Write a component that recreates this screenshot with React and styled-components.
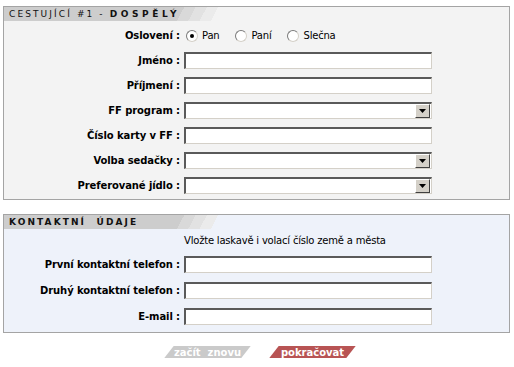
import React from "react";
import styled, { createGlobalStyle } from "styled-components";

const Global = createGlobalStyle`
  html, body { margin: 0; padding: 0; background: #fff; }
  body { font-family: Tahoma, "DejaVu Sans", Verdana, sans-serif; font-size: 11px; color: #000; }
`;

const Page = styled.div`
  width: 507px;
  padding: 6px 0 0 3px;
  display: flex;
  flex-direction: column;
`;

const Box = styled.section`
  border: 1px solid #a4a4a4;
  background: ${(p) => (p.$blue ? "#eef2fa" : "#f3f3f3")};
  margin-bottom: ${(p) => p.$mb || 0}px;
  padding-bottom: ${(p) => p.$pb || 0}px;
`;

const Header = styled.div`
  width: 218px;
  height: 14px;
  display: flex;
  align-items: center;
  padding-left: 5px;
  box-sizing: border-box;
  background: linear-gradient(
    118deg,
    #cdcdcd 0 80%,
    #d9d9d9 80% 85%,
    #e2e2e2 85% 90%,
    #ebebeb 90% 95%,
    transparent 95%
  );
  font-family: "DejaVu Sans", Verdana, sans-serif;
  font-size: 9px;
  letter-spacing: 2.1px;
  white-space: pre;
  color: #111;
`;

const Strong = styled.b`
  font-weight: bold;
  letter-spacing: ${(p) => p.$ls || 2.1}px;
`;

const Row = styled.div`
  display: grid;
  grid-template-columns: 176px 248px;
  column-gap: 4px;
  align-items: center;
  height: ${(p) => p.$h || 25}px;
  margin-top: ${(p) => p.$mt || 0}px;
`;

const Label = styled.label`
  text-align: right;
  font-family: "DejaVu Sans", Verdana, sans-serif;
  font-weight: bold;
  font-size: 10px;
  letter-spacing: -0.1px;
  white-space: nowrap;
`;

const Info = styled.div`
  grid-column: 2;
  font-family: "DejaVu Sans", Verdana, sans-serif;
  font-size: 10px;
  letter-spacing: -0.2px;
  white-space: nowrap;
`;

const Field = styled.div`
  height: 17px;
  box-sizing: border-box;
  background: #fff;
  border-top: 2px solid #5a5a5a;
  border-left: 2px solid #5a5a5a;
  border-right: 1px solid #d4d0c8;
  border-bottom: 1px solid #d4d0c8;
  display: flex;
  justify-content: flex-end;
  align-items: stretch;
`;

const DropBtn = styled.div`
  width: 15px;
  box-sizing: border-box;
  background: #d4d0c8;
  border-top: 1px solid #fff;
  border-left: 1px solid #fff;
  border-right: 1px solid #404040;
  border-bottom: 1px solid #404040;
  display: flex;
  align-items: center;
  justify-content: center;
  margin-right: 1px;
`;

const Radios = styled.div`
  display: flex;
  align-items: center;
  padding-left: 2px;
  font-family: "DejaVu Sans", Verdana, sans-serif;
  font-size: 10px;
  letter-spacing: -0.2px;
`;

const RadioItem = styled.span`
  display: flex;
  align-items: center;
  gap: 4px;
  margin-right: ${(p) => p.$mr || 0}px;
`;

const Circle = styled.span`
  width: 12px;
  height: 12px;
  box-sizing: border-box;
  border-radius: 50%;
  border: 1px solid #7a7a7a;
  border-bottom-color: #d4d0c8;
  border-right-color: #d4d0c8;
  background: #fff;
  display: flex;
  align-items: center;
  justify-content: center;
`;

const Dot = styled.span`
  width: 4px;
  height: 4px;
  border-radius: 50%;
  background: #000;
`;

const Buttons = styled.div`
  display: flex;
  gap: 28px;
  padding-left: 166px;
  margin-top: 13px;
`;

const Btn = styled.span`
  position: relative;
  width: 77px;
  height: 12px;
  display: flex;
  align-items: center;
  justify-content: center;
  color: #fff;
  font-family: "DejaVu Sans", Verdana, sans-serif;
  font-weight: bold;
  font-size: 10px;
  white-space: pre;
  &::before {
    content: "";
    position: absolute;
    inset: 0;
    background: ${(p) => (p.$red ? "#b85454" : "#cacaca")};
    transform: skewX(-38deg);
  }
  & > span {
    position: relative;
  }
`;

const Arrow = () => (
  <svg width="7" height="4" viewBox="0 0 7 4">
    <path d="M0 0h7L3.5 4z" fill="#000" />
  </svg>
);

const Input = ({ select }) => (
  <Field>{select && <DropBtn><Arrow /></DropBtn>}</Field>
);

const passenger = [
  ["Jméno :", false],
  ["Příjmení :", false],
  ["FF program :", true],
  ["Číslo karty v FF :", false],
  ["Volba sedačky :", true],
  ["Preferované jídlo :", true],
];

const contact = ["První kontaktní telefon :", "Druhý kontaktní telefon :", "E-mail :"];

export default function App() {
  return (
    <Page>
      <Global />
      <Box $mb={14} $pb={1}>
        <Header>
          {"CESTUJÍCÍ #1 - "}
          <Strong $ls={3.6}>DOSPĚLÝ</Strong>
        </Header>
        <Row $mt={2}>
          <Label>Oslovení :</Label>
          <Radios>
            <RadioItem $mr={16}>
              <Circle><Dot /></Circle>Pan
            </RadioItem>
            <RadioItem $mr={16}>
              <Circle />Paní
            </RadioItem>
            <RadioItem>
              <Circle />Slečna
            </RadioItem>
          </Radios>
        </Row>
        {passenger.map(([l, s]) => (
          <Row key={l}>
            <Label>{l}</Label>
            <Input select={s} />
          </Row>
        ))}
      </Box>
      <Box $blue $pb={3}>
        <Header>
          <Strong>{"KONTAKTNÍ  ÚDAJE"}</Strong>
        </Header>
        <Row $h={22}>
          <Info>Vložte laskavě i volací číslo země a města</Info>
        </Row>
        {contact.map((l) => (
          <Row key={l} $h={26}>
            <Label>{l}</Label>
            <Input />
          </Row>
        ))}
      </Box>
      <Buttons>
        <Btn><span>{"začít  znovu"}</span></Btn>
        <Btn $red><span>pokračovat</span></Btn>
      </Buttons>
    </Page>
  );
}
